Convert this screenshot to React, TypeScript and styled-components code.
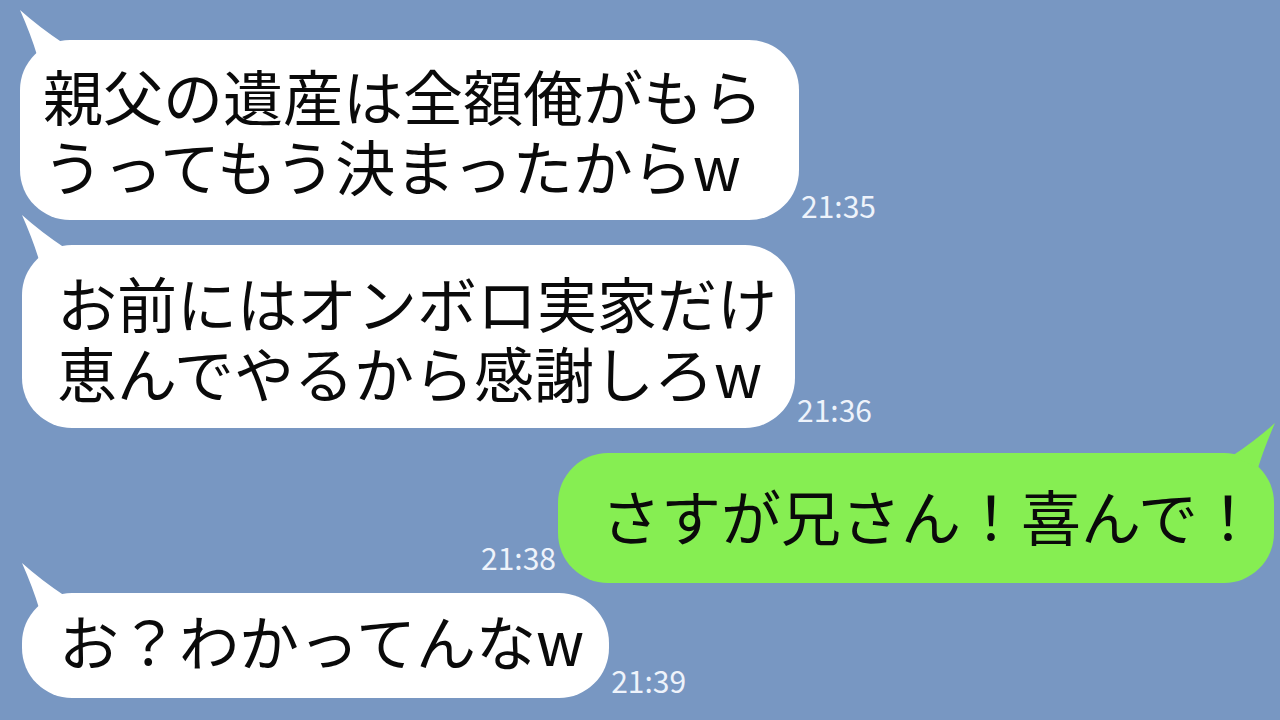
import React from "react";
import styled, { createGlobalStyle } from "styled-components";

const Global = createGlobalStyle`
  html, body { margin: 0; padding: 0; }
  body {
    width: 1280px;
    height: 720px;
    overflow: hidden;
    background: #7897c2;
    font-family: "Noto Sans CJK JP", "Noto Sans", sans-serif;
  }
`;

const Chat = styled.div`
  width: 1280px;
  height: 720px;
  box-sizing: border-box;
  padding: 40px 6px 0 20px;
  display: flex;
  flex-direction: column;
`;

const Row = styled.div<{ $mine?: boolean; $top: number; $indent: number }>`
  display: flex;
  flex-direction: ${(p) => (p.$mine ? "row-reverse" : "row")};
  align-items: flex-end;
  margin-top: ${(p) => p.$top}px;
  margin-left: ${(p) => p.$indent}px;
`;

const Bubble = styled.div<{ $mine?: boolean; $pad: string }>`
  position: relative;
  background: ${(p) => (p.$mine ? "#86ee52" : "#ffffff")};
  color: #0a0a0a;
  border-radius: 50px;
  padding: ${(p) => p.$pad};
  font-size: 60px;
  font-weight: 400;
  line-height: 70px;
  white-space: nowrap;
`;

const Line = styled.div`
  height: 70px;
`;

const Tail = styled.svg<{ $mine?: boolean }>`
  position: absolute;
  top: -31px;
  ${(p) => (p.$mine ? "right: -2px; transform: scaleX(-1);" : "left: -1px;")}
  width: 50px;
  height: 50px;
  overflow: visible;
`;

const Time = styled.span<{ $bottom: number }>`
  font-size: 30px;
  line-height: 30px;
  font-weight: 400;
  color: #eef3fb;
  margin: 0 2px ${(p) => p.$bottom}px;
  font-family: "Noto Sans CJK JP", "Noto Sans", sans-serif;
`;

const TailShape: React.FC<{ mine?: boolean; color: string }> = ({ mine, color }) => (
  <Tail $mine={mine} viewBox="0 0 50 50">
    <path d="M1 1 Q 12 26 18 46 L 44 34 Q 20 18 1 1 Z" fill={color} />
  </Tail>
);

type Msg = {
  lines: string[];
  time: string;
  mine?: boolean;
  top: number;
  indent: number;
  pad: string;
  tb: number;
};

const msgs: Msg[] = [
  {
    lines: ["親父の遺産は全額俺がもら", "うってもう決まったからw"],
    time: "21:35",
    top: 0,
    indent: 0,
    pad: "20px 36px 20px 23px",
    tb: 0,
  },
  {
    lines: ["お前にはオンボロ実家だけ", "恵んでやるから感謝しろw"],
    time: "21:36",
    top: 25,
    indent: 2,
    pad: "22px 18px 21px 35px",
    tb: 4,
  },
  {
    lines: ["さすが兄さん！喜んで！"],
    time: "21:38",
    mine: true,
    top: 25,
    indent: 0,
    pad: "27px 16px 33px 43px",
    tb: 11,
  },
  {
    lines: ["お？わかってんなw"],
    time: "21:39",
    top: 10,
    indent: 2,
    pad: "12px 25px 23px 37px",
    tb: 3,
  },
];

export default function App() {
  return (
    <>
      <Global />
      <Chat>
        {msgs.map((m) => (
          <Row key={m.time} $mine={m.mine} $top={m.top} $indent={m.indent}>
            <Bubble $mine={m.mine} $pad={m.pad}>
              <TailShape mine={m.mine} color={m.mine ? "#86ee52" : "#ffffff"} />
              {m.lines.map((l, i) => (
                <Line key={i}>{l}</Line>
              ))}
            </Bubble>
            <Time $bottom={m.tb}>{m.time}</Time>
          </Row>
        ))}
      </Chat>
    </>
  );
}
